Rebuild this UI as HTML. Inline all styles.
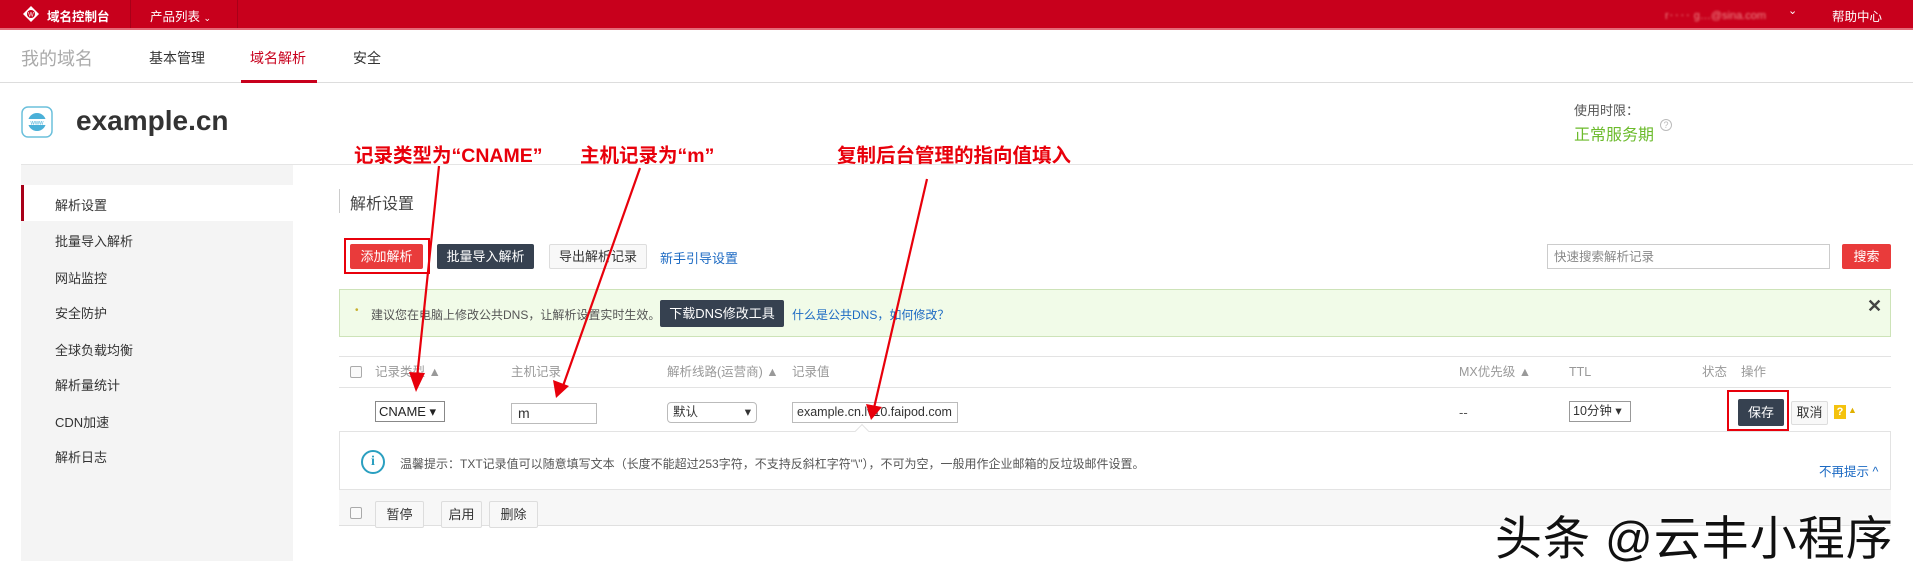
<!DOCTYPE html>
<html><head><meta charset="utf-8"><style>
*{margin:0;padding:0;box-sizing:border-box}
body{width:1913px;height:561px;overflow:hidden;background:#fff;font-family:"Liberation Sans","Noto Sans CJK SC",sans-serif;font-size:13px;color:#333;position:relative}
.a{position:absolute;white-space:nowrap}
.btn{position:absolute;font-size:13px;text-align:center;border-radius:2px}
.ann{position:absolute;color:#e8000b;font-weight:bold;font-size:19.5px;white-space:nowrap}
.hd{position:absolute;top:364px;color:#999;font-size:12.5px;white-space:nowrap;line-height:16px;height:16px}
.cb{position:absolute;width:12px;height:12px;border:1px solid #aaa;border-radius:2px;background:#fafafa}
</style></head><body>
<div class="a" style="left:0;top:0;width:1913px;height:28px;background:#c8001c"></div>
<div class="a" style="left:0;top:28px;width:1913px;height:2px;background:#e46a78"></div>
<div class="a" style="left:130px;top:0;width:1px;height:28px;background:#a80018"></div>
<div class="a" style="left:237px;top:0;width:1px;height:28px;background:#a80018"></div>
<svg class="a" style="left:22px;top:5px" width="18" height="18" viewBox="0 0 18 18"><path d="M9 1L17 9L9 17L1 9Z" fill="#fff"/><circle cx="9" cy="9" r="4" fill="#c8001c"/><text x="9" y="11.5" font-size="6" fill="#fff" text-anchor="middle" font-family="Liberation Sans">W</text></svg>
<div class="a" style="left:47px;top:6px;color:#fff;font-size:12.5px;font-weight:bold">域名控制台</div>
<div class="a" style="left:150px;top:6px;color:#fff;font-size:12.5px">产品列表 <span style="font-size:9px">&#8964;</span></div>
<div class="a" style="left:1665px;top:7px;width:110px;height:12px;color:#e88;font-size:11px;filter:blur(1px)">r‥‥ g…@sina.com</div>
<div class="a" style="left:1788px;top:4px;color:#fff;font-size:11px">&#8964;</div>
<div class="a" style="left:1832px;top:6px;color:#fff;font-size:12.5px">帮助中心</div>
<div class="a" style="left:21px;top:45px;color:#aaa;font-size:18px">我的域名</div>
<div class="a" style="left:149px;top:48px;font-size:14px">基本管理</div>
<div class="a" style="left:250px;top:48px;font-size:14px;color:#c8001c">域名解析</div>
<div class="a" style="left:353px;top:48px;font-size:14px">安全</div>
<div class="a" style="left:0;top:82px;width:1913px;height:1px;background:#ddd"></div>
<div class="a" style="left:241px;top:80px;width:76px;height:3px;background:#c8001c"></div>
<svg class="a" style="left:21px;top:106px" width="32" height="32" viewBox="0 0 32 32"><rect x="1" y="1" width="30" height="30" rx="6" fill="#fff" stroke="#6cc0dc" stroke-width="1.5"/><circle cx="16" cy="16" r="9" fill="#4ab0d8"/><rect x="6" y="13" width="20" height="6" fill="#fff"/><text x="16" y="18.3" font-size="6" fill="#4ab0d8" text-anchor="middle" font-family="Liberation Sans">www</text></svg>
<div class="a" style="left:76px;top:105px;font-size:28px;font-weight:bold;color:#333">example.cn</div>
<div class="a" style="left:1574px;top:100px;color:#555;font-size:13px">使用时限：</div>
<div class="a" style="left:1574px;top:121px;color:#6cbb2c;font-size:16px">正常服务期</div>
<div class="a" style="left:1660px;top:119px;width:12px;height:12px;border:1px solid #bbb;border-radius:50%;color:#bbb;font-size:9px;text-align:center;line-height:10px">?</div>
<div class="a" style="left:21px;top:164px;width:1892px;height:1px;background:#e5e5e5"></div>
<div class="a" style="left:21px;top:165px;width:272px;height:396px;background:#f4f4f4"></div>
<div class="a" style="left:21px;top:185px;width:272px;height:36px;background:#fff"></div>
<div class="a" style="left:21px;top:185px;width:3px;height:36px;background:#a80018"></div>
<div class="a" style="left:55px;top:195px">解析设置</div>
<div class="a" style="left:55px;top:231px">批量导入解析</div>
<div class="a" style="left:55px;top:268px">网站监控</div>
<div class="a" style="left:55px;top:303px">安全防护</div>
<div class="a" style="left:55px;top:340px">全球负载均衡</div>
<div class="a" style="left:55px;top:375px">解析量统计</div>
<div class="a" style="left:55px;top:412px">CDN加速</div>
<div class="a" style="left:55px;top:447px">解析日志</div>
<div class="a" style="left:339px;top:189px;width:1px;height:24px;background:#ccc"></div>
<div class="a" style="left:350px;top:190px;font-size:16px;color:#444">解析设置</div>
<div class="a" style="left:344px;top:238px;width:86px;height:36px;border:2px solid #e8000b"></div>
<div class="btn" style="left:350px;top:244px;width:73px;height:25px;background:#e93b3b;color:#fff;line-height:25px">添加解析</div>
<div class="btn" style="left:437px;top:244px;width:97px;height:25px;background:#364150;color:#fff;line-height:25px">批量导入解析</div>
<div class="btn" style="left:549px;top:244px;width:98px;height:25px;background:#f8f8f8;border:1px solid #ddd;line-height:23px">导出解析记录</div>
<div class="a" style="left:660px;top:248px;color:#1c6ac3">新手引导设置</div>
<div class="a" style="left:1547px;top:244px;width:283px;height:25px;border:1px solid #ccc;color:#888;padding:4px 6px;font-size:12.5px;line-height:16px">快速搜索解析记录</div>
<div class="btn" style="left:1842px;top:244px;width:49px;height:25px;background:#e93b3b;color:#fff;line-height:25px">搜索</div>
<div class="a" style="left:339px;top:289px;width:1552px;height:48px;background:#f1fbe8;border:1px solid #cde3b8"></div>
<div class="a" style="left:355px;top:305px;color:#c8b030;font-size:10px">•</div>
<div class="a" style="left:371px;top:306px;color:#555;font-size:12px">建议您在电脑上修改公共DNS，让解析设置实时生效。</div>
<div class="btn" style="left:660px;top:300px;width:124px;height:27px;background:#364150;color:#fff;line-height:27px">下载DNS修改工具</div>
<div class="a" style="left:792px;top:306px;color:#1c6ac3;font-size:12px">什么是公共DNS，如何修改？</div>
<div class="a" style="left:1867px;top:296px;color:#444;font-size:18px;font-weight:bold">✕</div>
<div class="a" style="left:339px;top:356px;width:1552px;height:1px;background:#e3e3e3"></div>
<div class="a" style="left:339px;top:387px;width:1552px;height:1px;background:#e3e3e3"></div>
<div class="cb" style="left:350px;top:366px"></div>
<div class="hd" style="left:375px">记录类型 ▲</div>
<div class="hd" style="left:511px">主机记录</div>
<div class="hd" style="left:667px">解析线路(运营商) ▲</div>
<div class="hd" style="left:792px">记录值</div>
<div class="hd" style="left:1459px">MX优先级 ▲</div>
<div class="hd" style="left:1569px">TTL</div>
<div class="hd" style="left:1702px">状态</div>
<div class="hd" style="left:1741px">操作</div>
<div class="a" style="left:375px;top:401px;width:70px;height:21px;border:1px solid #888;padding:0 3px;line-height:19px;font-size:13px;color:#222">CNAME ▾</div>
<div class="a" style="left:511px;top:403px;width:86px;height:21px;border:1px solid #bbb;padding:0 6px;line-height:19px;font-size:14px">m</div>
<div class="a" style="left:667px;top:402px;width:90px;height:21px;border:1px solid #bbb;border-radius:4px;padding:0 5px;line-height:19px;font-size:12.5px">默认<span style="float:right">▾</span></div>
<div class="a" style="left:792px;top:402px;width:166px;height:21px;border:1px solid #bbb;padding:0 4px;line-height:19px;font-size:12.5px;color:#333">example.cn.lv10.faipod.com</div>
<div class="a" style="left:1459px;top:405px;color:#555">--</div>
<div class="a" style="left:1569px;top:401px;width:62px;height:21px;border:1px solid #999;padding:0 3px;line-height:19px;font-size:12.5px">10分钟 ▾</div>
<div class="a" style="left:1727px;top:390px;width:62px;height:41px;border:2px solid #e8000b"></div>
<div class="btn" style="left:1738px;top:399px;width:46px;height:27px;background:#364150;color:#fff;line-height:27px">保存</div>
<div class="btn" style="left:1791px;top:401px;width:37px;height:24px;border:1px solid #ddd;background:#f8f8f8;line-height:22px">取消</div>
<div class="a" style="left:1834px;top:405px;width:12px;height:14px;background:#f4c20d;color:#fff;font-size:11px;font-weight:bold;text-align:center;line-height:14px">?</div>
<div class="a" style="left:1848px;top:405px;color:#e0b000;font-size:9px">▲</div>
<div class="a" style="left:339px;top:431px;width:1552px;height:59px;border:1px solid #e3e3e3;background:#fff"></div>
<div class="a" style="left:857px;top:426px;width:10px;height:10px;background:#fff;border-left:1px solid #e3e3e3;border-top:1px solid #e3e3e3;transform:rotate(45deg)"></div>
<div class="a" style="left:361px;top:450px;width:24px;height:24px;border:2.5px solid #2a9fc0;border-radius:50%;color:#2a9fc0;font-weight:bold;font-size:14px;text-align:center;line-height:19px;font-family:'Liberation Serif',serif">i</div>
<div class="a" style="left:400px;top:455px;color:#555;font-size:12px">温馨提示：TXT记录值可以随意填写文本（长度不能超过253字符，不支持反斜杠字符"\"），不可为空，一般用作企业邮箱的反垃圾邮件设置。</div>
<div class="a" style="left:1819px;top:461px;color:#1c6ac3;font-size:12.5px">不再提示 ^</div>
<div class="a" style="left:339px;top:490px;width:1552px;height:36px;background:#f7f7f7;border-bottom:1px solid #e0e0e0"></div>
<div class="cb" style="left:350px;top:507px"></div>
<div class="btn" style="left:375px;top:501px;width:49px;height:27px;border:1px solid #ddd;background:#f8f8f8;line-height:25px">暂停</div>
<div class="btn" style="left:441px;top:501px;width:41px;height:27px;border:1px solid #ddd;background:#f8f8f8;line-height:25px">启用</div>
<div class="btn" style="left:489px;top:501px;width:49px;height:27px;border:1px solid #ddd;background:#f8f8f8;line-height:25px">删除</div>
<div class="a" style="left:1495px;top:500px;font-size:47px;color:#111;letter-spacing:1px;text-shadow:0 0 2px #fff,0 0 3px #fff">头条 @云丰小程序</div>
<div class="ann" style="left:354px;top:139px">记录类型为“CNAME”</div>
<div class="ann" style="left:580px;top:139px">主机记录为“m”</div>
<div class="ann" style="left:837px;top:139px">复制后台管理的指向值填入</div>
<svg class="a" style="left:0;top:0" width="1913" height="561">
<g stroke="#e8000b" stroke-width="2.2" fill="none">
<line x1="439" y1="166" x2="417" y2="378"/>
<line x1="640" y1="168" x2="563" y2="386"/>
<line x1="927" y1="179" x2="874" y2="408"/>
</g>
<g fill="#e8000b">
<path d="M409,372 L425,373 L416,392 Z"/>
<path d="M553,380 L569,386 L556,398 Z"/>
<path d="M866,404 L882,407 L871,420 Z"/>
</g>
</svg>
</body></html>
